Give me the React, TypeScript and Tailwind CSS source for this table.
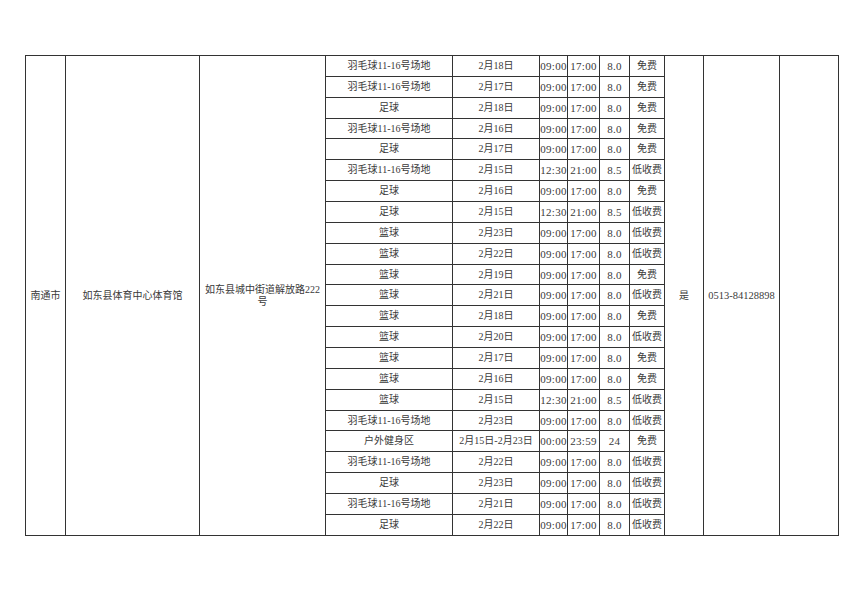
import React from "react";

type Row = [string, string, string, string, string, string];

const rows: Row[] = [
  ["羽毛球11-16号场地", "2月18日", "09:00", "17:00", "8.0", "免费"],
  ["羽毛球11-16号场地", "2月17日", "09:00", "17:00", "8.0", "免费"],
  ["足球", "2月18日", "09:00", "17:00", "8.0", "免费"],
  ["羽毛球11-16号场地", "2月16日", "09:00", "17:00", "8.0", "免费"],
  ["足球", "2月17日", "09:00", "17:00", "8.0", "免费"],
  ["羽毛球11-16号场地", "2月15日", "12:30", "21:00", "8.5", "低收费"],
  ["足球", "2月16日", "09:00", "17:00", "8.0", "免费"],
  ["足球", "2月15日", "12:30", "21:00", "8.5", "低收费"],
  ["篮球", "2月23日", "09:00", "17:00", "8.0", "低收费"],
  ["篮球", "2月22日", "09:00", "17:00", "8.0", "低收费"],
  ["篮球", "2月19日", "09:00", "17:00", "8.0", "免费"],
  ["篮球", "2月21日", "09:00", "17:00", "8.0", "低收费"],
  ["篮球", "2月18日", "09:00", "17:00", "8.0", "免费"],
  ["篮球", "2月20日", "09:00", "17:00", "8.0", "低收费"],
  ["篮球", "2月17日", "09:00", "17:00", "8.0", "免费"],
  ["篮球", "2月16日", "09:00", "17:00", "8.0", "免费"],
  ["篮球", "2月15日", "12:30", "21:00", "8.5", "低收费"],
  ["羽毛球11-16号场地", "2月23日", "09:00", "17:00", "8.0", "低收费"],
  ["户外健身区", "2月15日-2月23日", "00:00", "23:59", "24", "免费"],
  ["羽毛球11-16号场地", "2月22日", "09:00", "17:00", "8.0", "低收费"],
  ["足球", "2月23日", "09:00", "17:00", "8.0", "低收费"],
  ["羽毛球11-16号场地", "2月21日", "09:00", "17:00", "8.0", "低收费"],
  ["足球", "2月22日", "09:00", "17:00", "8.0", "低收费"],
];

const td = "border border-[#333] text-center align-middle p-0 whitespace-nowrap overflow-hidden";
const tdNum = "border border-[#333] text-center align-middle p-0 whitespace-nowrap overflow-hidden text-[11px] tracking-[0.3px]";
const tdSpan = "border border-[#333] text-center align-middle px-[3px] py-0";

export default function App() {
  return (
    <div
      className="min-h-[611px] w-[864px] bg-white pt-[55px] pl-[25px] text-[#3a3a3a] text-[10px] leading-[12px]"
      style={{ fontFamily: '"Liberation Serif", "Noto Sans CJK SC", serif' }}
    >
      <table className="table-fixed border-collapse w-[813px] h-[481px]">
        <colgroup>
          <col className="w-[40px]" />
          <col className="w-[134px]" />
          <col className="w-[126px]" />
          <col className="w-[127px]" />
          <col className="w-[87px]" />
          <col className="w-[28px]" />
          <col className="w-[32px]" />
          <col className="w-[30px]" />
          <col className="w-[35px]" />
          <col className="w-[39px]" />
          <col className="w-[76px]" />
          <col className="w-[59px]" />
        </colgroup>
        <tbody>
          {rows.map((r, i) => (
            <tr key={i}>
              {i === 0 && (
                <>
                  <td rowSpan={23} className={tdSpan}>南通市</td>
                  <td rowSpan={23} className={tdSpan}>如东县体育中心体育馆</td>
                  <td rowSpan={23} className={tdSpan}>如东县城中街道解放路222号</td>
                </>
              )}
              <td className={td}>{r[0]}</td>
              <td className={td}>{r[1]}</td>
              <td className={tdNum}>{r[2]}</td>
              <td className={tdNum}>{r[3]}</td>
              <td className={tdNum}>{r[4]}</td>
              <td className={td}>{r[5]}</td>
              {i === 0 && (
                <>
                  <td rowSpan={23} className={tdSpan}>是</td>
                  <td rowSpan={23} className={`${tdSpan} text-[10.5px]`}>0513-84128898</td>
                  <td rowSpan={23} className={tdSpan}></td>
                </>
              )}
            </tr>
          ))}
        </tbody>
      </table>
    </div>
  );
}
